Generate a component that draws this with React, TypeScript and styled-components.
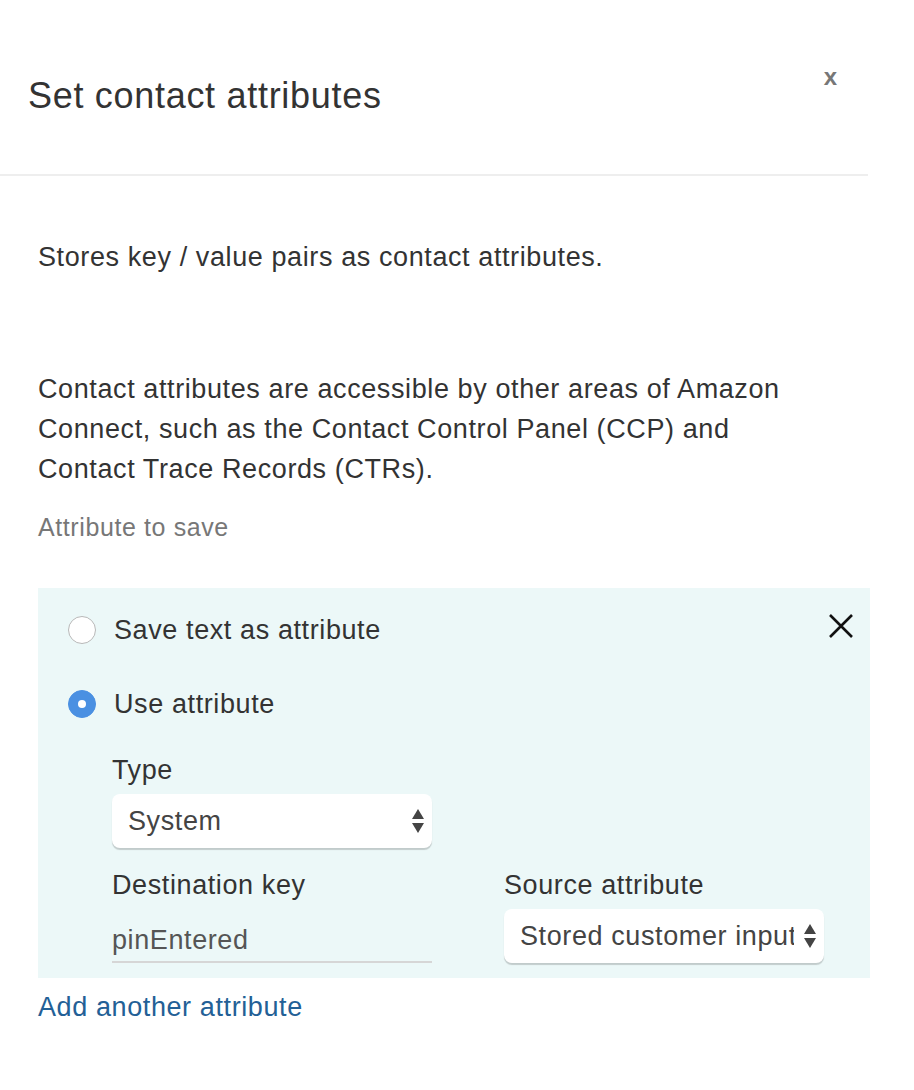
import React from "react";
import styled, { createGlobalStyle } from "styled-components";

const GlobalStyle = createGlobalStyle`
  html, body {
    margin: 0;
    padding: 0;
    background: #fff;
  }
  body {
    font-family: "Liberation Sans", Arial, sans-serif;
    color: #333;
    letter-spacing: 0.6px;
  }
`;

export default function App() {
  return (
    <>
      <GlobalStyle />
      <Page>
        <Header>
          <Title>Set contact attributes</Title>
          <HeaderClose>x</HeaderClose>
        </Header>
        <Body>
          <Intro>Stores key / value pairs as contact attributes.</Intro>
          <Para>
            Contact attributes are accessible by other areas of Amazon
            <br />
            Connect, such as the Contact Control Panel (CCP) and
            <br />
            Contact Trace Records (CTRs).
          </Para>
          <SubLabel>Attribute to save</SubLabel>
          <Panel>
            <PanelClose aria-label="remove">
              <svg width="26" height="26" viewBox="0 0 26 26">
                <path d="M2 2 L24 24 M24 2 L2 24" stroke="#111" strokeWidth="2.6" />
              </svg>
            </PanelClose>
            <RadioRow>
              <Radio />
              <RadioLabel>Save text as attribute</RadioLabel>
            </RadioRow>
            <RadioRow>
              <Radio checked />
              <RadioLabel>Use attribute</RadioLabel>
            </RadioRow>
            <Fields>
              <Field>
                <FieldLabel>Type</FieldLabel>
                <Select>
                  <SelectText>System</SelectText>
                  <Arrows />
                </Select>
              </Field>
              <FieldRow>
                <Field>
                  <FieldLabel>Destination key</FieldLabel>
                  <TextInput>pinEntered</TextInput>
                </Field>
                <Field>
                  <FieldLabel>Source attribute</FieldLabel>
                  <Select>
                    <SelectText>Stored customer input</SelectText>
                    <Arrows />
                  </Select>
                </Field>
              </FieldRow>
            </Fields>
          </Panel>
          <AddLink>Add another attribute</AddLink>
        </Body>
      </Page>
    </>
  );
}

function Arrows() {
  return (
    <ArrowBox>
      <svg width="14" height="26" viewBox="0 0 14 26">
        <path d="M7 1 L13 11 L1 11 Z" fill="#444" />
        <path d="M7 25 L13 15 L1 15 Z" fill="#444" />
      </svg>
    </ArrowBox>
  );
}

const Page = styled.div`
  width: 914px;
  height: 1090px;
  background: #fff;
`;

const Header = styled.div`
  width: 868px;
  height: 176px;
  border-bottom: 2px solid #eee;
  display: flex;
  justify-content: space-between;
  align-items: flex-start;
  box-sizing: border-box;
  padding: 72px 0 0 28px;
`;

const Title = styled.h1`
  margin: 0;
  font-size: 36px;
  font-weight: 400;
  color: #333;
  letter-spacing: 0.7px;
  line-height: 48px;
`;

const HeaderClose = styled.span`
  font-size: 24px;
  font-weight: 700;
  color: #777;
  letter-spacing: 0;
  margin-right: 31px;
  margin-top: -9px;
`;

const Body = styled.div`
  padding: 66px 44px 0 38px;
`;

const Intro = styled.p`
  margin: 0;
  font-size: 27px;
  line-height: 30px;
  color: #333;
`;

const Para = styled.p`
  margin: 97px 0 0;
  font-size: 27px;
  line-height: 40px;
  color: #333;
`;

const SubLabel = styled.div`
  margin-top: 23px;
  font-size: 25px;
  line-height: 30px;
  color: #777;
`;

const Panel = styled.div`
  position: relative;
  margin-top: 46px;
  background: #ecf8f8;
  height: 390px;
  box-sizing: border-box;
  padding: 27px 0 0 30px;
`;

const PanelClose = styled.div`
  position: absolute;
  top: 25px;
  right: 16px;
  line-height: 0;
`;

const RadioRow = styled.div`
  display: flex;
  align-items: center;
  gap: 18px;
  height: 30px;
  margin-bottom: 44px;
`;

const Radio = styled.span<{ checked?: boolean }>`
  width: 28px;
  height: 28px;
  border-radius: 50%;
  box-sizing: border-box;
  background: ${(p) => (p.checked ? "#4a90e2" : "#fff")};
  border: 1px solid ${(p) => (p.checked ? "#4a90e2" : "#b8b8b8")};
  display: flex;
  align-items: center;
  justify-content: center;
  &::after {
    content: "";
    width: 8px;
    height: 8px;
    border-radius: 50%;
    background: #fff;
    display: ${(p) => (p.checked ? "block" : "none")};
  }
`;

const RadioLabel = styled.span`
  font-size: 27px;
  color: #333;
`;

const Fields = styled.div`
  margin-left: 44px;
  margin-top: -8px;
`;

const FieldRow = styled.div`
  display: flex;
  gap: 72px;
  margin-top: 22px;
`;

const Field = styled.div`
  display: flex;
  flex-direction: column;
  width: 320px;
`;

const FieldLabel = styled.div`
  font-size: 27px;
  line-height: 30px;
  color: #333;
  margin-bottom: 9px;
`;

const Select = styled.div`
  height: 54px;
  width: 320px;
  box-sizing: border-box;
  background: #fff;
  border-radius: 8px;
  box-shadow: 0 2px 1px rgba(0, 0, 0, 0.18);
  display: flex;
  align-items: center;
  padding: 0 7px 0 16px;
  gap: 9px;
`;

const SelectText = styled.span`
  flex: 1;
  font-size: 27px;
  color: #444;
  white-space: nowrap;
  overflow: hidden;
`;

const ArrowBox = styled.span`
  line-height: 0;
`;

const TextInput = styled.div`
  height: 54px;
  box-sizing: border-box;
  border-bottom: 2px solid #d6d6d6;
  font-size: 27px;
  color: #555;
  display: flex;
  align-items: flex-end;
  padding-bottom: 5px;
`;

const AddLink = styled.a`
  display: block;
  margin-top: 14px;
  font-size: 27px;
  color: #236096;
  text-decoration: none;
  cursor: pointer;
`;
